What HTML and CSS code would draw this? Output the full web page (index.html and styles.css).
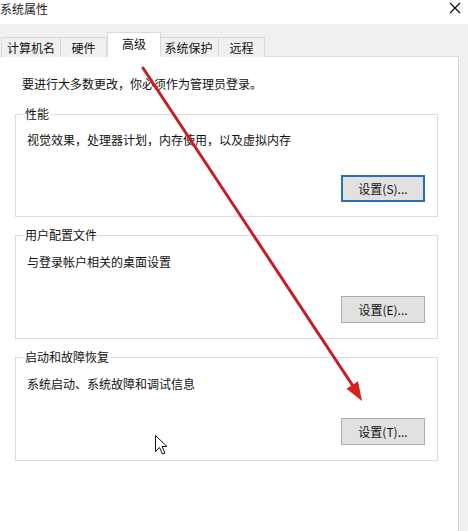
FILE: index.html
```html
<!DOCTYPE html>
<html lang="zh-CN">
<head>
<meta charset="utf-8">
<title>系统属性</title>
<link rel="stylesheet" href="styles.css">
</head>
<body>
<div class="window">
  <div class="titlebar">
    <span class="title">系统属性</span>
    <svg class="close" width="12" height="12" viewBox="0 0 12 12"><path d="M1 1 L11 11 M11 1 L1 11" stroke="#000" stroke-width="1.1" fill="none"/></svg>
  </div>
  <div class="tabarea">
    <div class="tabs">
      <div class="tab t1">计算机名</div>
      <div class="tab t2">硬件</div>
      <div class="tab t3 active">高级</div>
      <div class="tab t4">系统保护</div>
      <div class="tab t5">远程</div>
    </div>
    <div class="panel">
      <p class="intro">要进行大多数更改，你必须作为管理员登录。</p>
      <fieldset class="group">
        <legend>性能</legend>
        <p class="desc">视觉效果，处理器计划，内存使用，以及虚拟内存</p>
        <div class="actions"><button class="btn default">设置(S)...</button></div>
      </fieldset>
      <fieldset class="group">
        <legend>用户配置文件</legend>
        <p class="desc">与登录帐户相关的桌面设置</p>
        <div class="actions"><button class="btn">设置(E)...</button></div>
      </fieldset>
      <fieldset class="group">
        <legend>启动和故障恢复</legend>
        <p class="desc">系统启动、系统故障和调试信息</p>
        <div class="actions"><button class="btn">设置(T)...</button></div>
      </fieldset>
    </div>
  </div>
</div>
<svg class="overlay" width="468" height="531" viewBox="0 0 468 531">
  <line x1="143" y1="68" x2="353" y2="386" stroke="#c81d22" stroke-width="3" stroke-linecap="round"/>
  <polygon points="362,401 346.5,388.8 358,381.2" fill="#d9221f"/>
  <path d="M155.5 435.5 L155.5 451.5 L159.5 447.5 L162.5 454 L165 453 L162 446.5 L167 446.5 Z" fill="#fff" stroke="#111" stroke-width="1" stroke-linejoin="round"/>
</svg>
</body>
</html>
```
FILE: styles.css
```css
html, body {
  margin: 0;
  padding: 0;
  background: #f0f0f0;
}
body {
  width: 468px;
  height: 531px;
  overflow: hidden;
  position: relative;
  font-family: "Noto Sans CJK SC", "Noto Sans", sans-serif;
  font-size: 12px;
  line-height: 16px;
  color: #111;
}
.window {
  display: flex;
  flex-direction: column;
  height: 531px;
}
.titlebar {
  height: 24px;
  background: #fff;
  display: flex;
  justify-content: space-between;
  align-items: flex-start;
  box-sizing: border-box;
}
.title {
  line-height: 17px;
  color: #222;
}
.close {
  margin-top: 2px;
  margin-right: 7px;
}
.tabarea {
  flex: 1;
  display: flex;
  flex-direction: column;
  padding-top: 9px;
  background: #f0f0f0;
}
.tabs {
  display: flex;
  align-items: flex-end;
  height: 24px;
  padding-left: 1px;
  position: relative;
  z-index: 2;
  margin-bottom: -1px;
}
.tab {
  box-sizing: border-box;
  height: 20px;
  border: 1px solid #d9d9d9;
  border-bottom: none;
  background: #f0f0f0;
  display: flex;
  align-items: center;
  justify-content: center;
  margin-left: -1px;
  color: #111;
  padding-top: 1px;
}
.t1 { width: 60px; margin-left: 0; }
.t2 { width: 47px; }
.t3 { width: 54px; margin-left: 0; margin-right: -2px; }
.t4 { width: 61px; }
.t5 { width: 47px; }
.tab.active {
  height: 25px;
  background: #fff;
  position: relative;
  z-index: 3;
  padding-top: 0;
  padding-bottom: 2px;
}
.panel {
  flex: 1;
  width: 460px;
  box-sizing: border-box;
  margin-left: -1px;
  background: #fff;
  border: 1px solid #d9d9d9;
  border-bottom: none;
  padding: 19px 20px 0 15px;
}
.intro {
  margin: 0 0 14px 7px;
}
.group {
  margin: 0 0 10px 0;
  border: 1px solid #dcdcdc;
  padding: 0 12px 14px 7px;
  min-width: 0;
}
.group + .group {
  padding-bottom: 15px;
}
.group legend {
  padding: 0 2px;
  color: #111;
}
.desc {
  margin: 10px 0 0 4px;
}
.group + .group .desc {
  margin-top: 11px;
}
.actions {
  display: flex;
  justify-content: flex-end;
  margin-top: 27px;
}
.group + .group .actions {
  margin-top: 26px;
}
.btn {
  width: 84px;
  height: 27px;
  box-sizing: border-box;
  background: #e1e1e1;
  border: 1px solid #adadad;
  font-family: "Noto Sans CJK SC", "Noto Sans", sans-serif;
  font-size: 12px;
  line-height: 16px;
  color: #111;
  padding: 0;
}
.btn.default {
  border: 2px solid #2a6fb5;
}
.overlay {
  position: absolute;
  left: 0;
  top: 0;
  pointer-events: none;
}
```
